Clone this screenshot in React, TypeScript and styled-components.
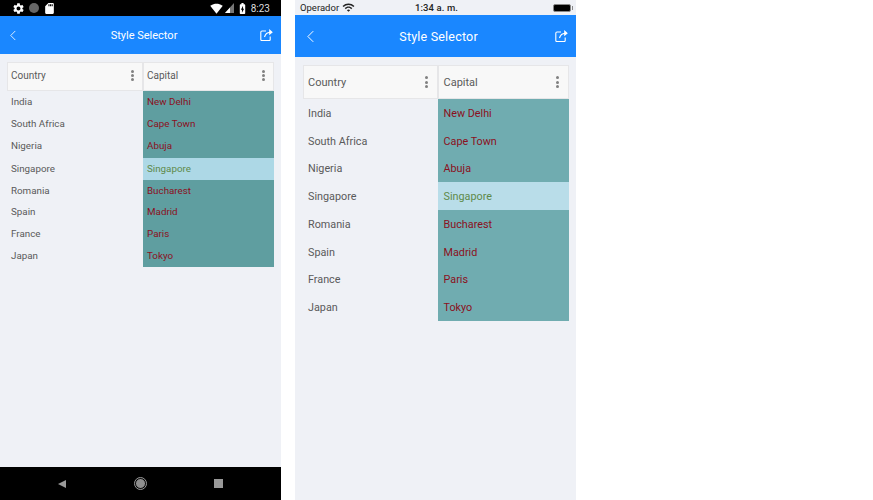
import React from 'react';
import styled, { createGlobalStyle } from 'styled-components';
import { MdSettings, MdSdCard, MdSignalWifi4Bar, MdBatteryChargingFull, MdWifi } from 'react-icons/md';

const rows = [
  { country: 'India', capital: 'New Delhi', height: 22 },
  { country: 'South Africa', capital: 'Cape Town', height: 22 },
  { country: 'Nigeria', capital: 'Abuja', height: 23 },
  { country: 'Singapore', capital: 'Singapore', height: 22, selected: true },
  { country: 'Romania', capital: 'Bucharest', height: 22 },
  { country: 'Spain', capital: 'Madrid', height: 21 },
  { country: 'France', capital: 'Paris', height: 22 },
  { country: 'Japan', capital: 'Tokyo', height: 22 },
];

function BackIcon({ size }: { size: number }) {
  return (
    <svg width={size * 0.55} height={size} viewBox="0 0 8 14" fill="none" stroke="#fff" strokeWidth="1.1">
      <path d="M7 1 1 7l6 6" />
    </svg>
  );
}

function OpenIcon() {
  return (
    <svg width="13" height="12" viewBox="0 0 13 12" fill="none" stroke="#fff" strokeWidth="1.1">
      <path d="M6 2H2A1.2 1.2 0 0 0 .8 3.2v7.2A1.2 1.2 0 0 0 2 11.6h7A1.2 1.2 0 0 0 10.2 10.4V7.5" />
      <path d="M4.5 8C5.3 5.2 7.2 3.5 10 3.4" />
      <path d="M12.8 3.2 9.2 0v6.2z" fill="#fff" stroke="none" />
    </svg>
  );
}

function SignalIcon() {
  return (
    <svg width="9" height="10" viewBox="0 0 9 10">
      <path d="M9 0v10H0z" fill="#777" />
      <path d="M5 4.4V10H0z" fill="#fff" />
    </svg>
  );
}

function Dots({ ios }: { ios?: boolean }) {
  return (
    <DotColumn $ios={ios}>
      <i />
      <i />
      <i />
    </DotColumn>
  );
}

function TableView({ ios }: { ios?: boolean }) {
  return (
    <Table $ios={ios}>
      <Header $ios={ios}>
        <HeaderCell $ios={ios}>
          Country
          <Dots ios={ios} />
        </HeaderCell>
        <HeaderCell $ios={ios}>
          Capital
          <Dots ios={ios} />
        </HeaderCell>
      </Header>
      {rows.map((r) => (
        <Row key={r.country} $ios={ios} $height={r.height}>
          <CountryCell $ios={ios}>{r.country}</CountryCell>
          <CapitalCell $ios={ios} $selected={r.selected}>{r.capital}</CapitalCell>
        </Row>
      ))}
    </Table>
  );
}

export default function App() {
  return (
    <>
      <GlobalStyle />
      <Page>
        <Phone>
          <AndroidStatus>
            <StatusGroup $gap={4}>
              <MdSettings size={13} />
              <GrayDot />
              <MdSdCard size={13} />
            </StatusGroup>
            <StatusGroup $gap={2}>
              <MdSignalWifi4Bar size={13} />
              <SignalIcon />
              <MdBatteryChargingFull size={13} />
              <AndroidTime>8:23</AndroidTime>
            </StatusGroup>
          </AndroidStatus>
          <NavBar>
            <BackIcon size={11} />
            <NavTitle>Style Selector</NavTitle>
            <OpenIcon />
          </NavBar>
          <Content>
            <TableView />
          </Content>
          <AndroidKeys>
            <BackKey />
            <HomeKey />
            <SquareKey />
          </AndroidKeys>
        </Phone>
        <Phone>
          <IosStatus>
            <Carrier>
              Operador
              <MdWifi size={13} />
            </Carrier>
            <IosTime>1:34 a. m.</IosTime>
            <Battery />
          </IosStatus>
          <NavBar $ios>
            <BackIcon size={13} />
            <NavTitle $ios>Style Selector</NavTitle>
            <OpenIcon />
          </NavBar>
          <Content>
            <TableView ios />
          </Content>
        </Phone>
      </Page>
    </>
  );
}

const GlobalStyle = createGlobalStyle`
  html, body {
    margin: 0;
    background: #fff;
    font-family: Roboto, "Liberation Sans", sans-serif;
  }
`;

const Page = styled.div`
  display: flex;
  gap: 14px;
  width: 873px;
  height: 500px;
  overflow: hidden;
`;

const Phone = styled.div`
  display: flex;
  flex-direction: column;
  width: 281px;
  height: 500px;
  background: #eff1f6;
`;

const AndroidStatus = styled.div`
  display: flex;
  align-items: center;
  justify-content: space-between;
  height: 16px;
  padding: 0 11px 0 12px;
  background: #000;
  color: #fff;
`;

const StatusGroup = styled.div<{ $gap: number }>`
  display: flex;
  align-items: center;
  gap: ${(p) => p.$gap}px;
`;

const GrayDot = styled.span`
  width: 10px;
  height: 10px;
  border-radius: 50%;
  background: #666;
`;

const AndroidTime = styled.span`
  font-size: 10px;
  color: #ddd;
`;

const IosStatus = styled.div`
  display: flex;
  align-items: center;
  justify-content: space-between;
  height: 15px;
  padding: 0 5px;
  color: #222;
  font-size: 9.5px;
`;

const Carrier = styled.div`
  display: flex;
  align-items: center;
  gap: 3px;
  width: 90px;
`;

const IosTime = styled.span`
  font-weight: 500;
  margin-left: -3px;
  letter-spacing: 0.1px;
`;

const Battery = styled.span`
  position: relative;
  width: 16px;
  height: 6px;
  margin-left: 67px;
  border: 1px solid #888;
  border-radius: 2px;
  background: #000;

  &::after {
    content: '';
    position: absolute;
    top: 1px;
    right: -3px;
    width: 1px;
    height: 4px;
    background: #888;
  }
`;

const NavBar = styled.div<{ $ios?: boolean }>`
  display: flex;
  align-items: center;
  justify-content: space-between;
  height: ${(p) => (p.$ios ? 42 : 38)}px;
  padding: 0 8px 0 ${(p) => (p.$ios ? 12 : 10)}px;
  background: #1a87ff;
`;

const NavTitle = styled.span<{ $ios?: boolean }>`
  margin-left: ${(p) => (p.$ios ? 8 : 12)}px;
  color: #fff;
  font-size: ${(p) => (p.$ios ? 12.5 : 11)}px;
  letter-spacing: ${(p) => (p.$ios ? 0.2 : 0)}px;
`;

const Content = styled.div`
  flex: 1;
`;

const Table = styled.div<{ $ios?: boolean }>`
  margin: ${(p) => (p.$ios ? '7.5px 7.5px 0' : '8px 7px 0')};
  font-size: ${(p) => (p.$ios ? 10.8 : 9.8)}px;
`;

const Header = styled.div<{ $ios?: boolean }>`
  display: grid;
  grid-template-columns: ${(p) => (p.$ios ? '135.5px 130.5px' : '136px 131px')};
  height: ${(p) => (p.$ios ? 34 : 29)}px;
  font-size: ${(p) => (p.$ios ? 11 : 10)}px;
`;

const HeaderCell = styled.div<{ $ios?: boolean }>`
  display: flex;
  align-items: center;
  justify-content: space-between;
  padding: ${(p) => (p.$ios ? 1 : 0)}px ${(p) => (p.$ios ? 9 : 8)}px ${(p) => (p.$ios ? 0 : 2)}px ${(p) => (p.$ios ? 4.5 : 3)}px;
  background: #f8f8f8;
  border: 1px solid #e6e6e8;
  color: #5a5a5a;
`;

const DotColumn = styled.div<{ $ios?: boolean }>`
  display: flex;
  flex-direction: column;
  gap: ${(p) => (p.$ios ? 1.5 : 1)}px;

  i {
    display: block;
    width: 3px;
    height: 3px;
    border-radius: 50%;
    background: #808080;
  }
`;

const Row = styled.div<{ $ios?: boolean; $height: number }>`
  display: grid;
  grid-template-columns: ${(p) => (p.$ios ? '135.5px 130.5px' : '136px 131px')};
  height: ${(p) => (p.$ios ? 27.75 : p.$height)}px;
`;

const CountryCell = styled.div<{ $ios?: boolean }>`
  display: flex;
  align-items: center;
  padding: ${(p) => (p.$ios ? '2px 0 0 5.5px' : '0 0 2px 4px')};
  color: #5a5a5a;
`;

const CapitalCell = styled.div<{ $ios?: boolean; $selected?: boolean }>`
  display: flex;
  align-items: center;
  padding: ${(p) => (p.$ios ? '2px 0 0 5.5px' : '0 0 2px 4px')};
  background: ${(p) => (p.$selected ? (p.$ios ? '#b9dde9' : '#add8e6') : p.$ios ? '#70acb0' : '#5f9ea0')};
  color: ${(p) => (p.$selected ? '#5e8a4a' : '#8b1020')};
`;

const AndroidKeys = styled.div`
  display: flex;
  align-items: center;
  justify-content: space-between;
  height: 33px;
  padding: 0 58px;
  background: #000;
`;

const BackKey = styled.span`
  width: 0;
  height: 0;
  border-top: 4.5px solid transparent;
  border-bottom: 4.5px solid transparent;
  border-right: 8px solid #9a9a9a;
`;

const HomeKey = styled.span`
  width: 9px;
  height: 9px;
  border: 1px solid #000;
  outline: 1px solid #9a9a9a;
  border-radius: 50%;
  background: #8f8f8f;
`;

const SquareKey = styled.span`
  width: 9px;
  height: 9px;
  background: #999;
`;
